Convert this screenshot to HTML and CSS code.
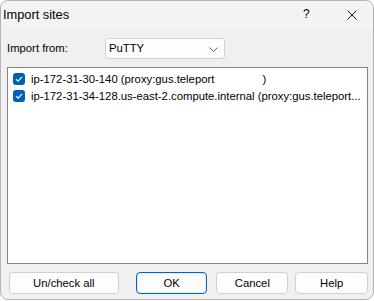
FILE: index.html
```html
<!DOCTYPE html>
<html>
<head>
<meta charset="utf-8">
<link rel="stylesheet" href="styles.css">
</head>
<body>
<div class="window">
  <div class="titlebar">
    <span class="title">Import sites</span>
    <span class="tb-help">?</span>
    <span class="tb-close"><svg width="10" height="10" viewBox="0 0 10 10"><path d="M0.5 0.5 L9.5 9.5 M9.5 0.5 L0.5 9.5" stroke="#1a1a1a" stroke-width="1"/></svg></span>
  </div>
  <div class="content">
    <div class="row-from">
      <span class="label">Import from:</span>
      <div class="combo">
        <span>PuTTY</span>
        <svg class="chev" width="9" height="5" viewBox="0 0 9 5"><path d="M0.5 0.5 L4.5 4.5 L8.5 0.5" fill="none" stroke="#606060" stroke-width="1"/></svg>
      </div>
    </div>
    <div class="list">
      <div class="item">
        <span class="cb"><svg width="12" height="12" viewBox="0 0 12 12"><path d="M3 6.2 L5 8.2 L9 4" fill="none" stroke="#fff" stroke-width="1.1"/></svg></span>
        <span class="txt">ip-172-31-30-140 (proxy:gus.teleport<span class="gap"></span>)</span>
      </div>
      <div class="item">
        <span class="cb"><svg width="12" height="12" viewBox="0 0 12 12"><path d="M3 6.2 L5 8.2 L9 4" fill="none" stroke="#fff" stroke-width="1.1"/></svg></span>
        <span class="txt">ip-172-31-34-128.us-east-2.compute.internal (proxy:gus.teleport...</span>
      </div>
    </div>
    <div class="buttons">
      <button class="btn btn-check">Un/check all</button>
      <button class="btn btn-ok">OK</button>
      <button class="btn btn-cancel">Cancel</button>
      <button class="btn btn-help">Help</button>
    </div>
  </div>
</div>
</body>
</html>
```
FILE: styles.css
```css
html, body {
  margin: 0;
  padding: 0;
  background: #ffffff;
}
body {
  width: 374px;
  height: 301px;
  overflow: hidden;
  font-family: "Liberation Sans", Arial, sans-serif;
  font-size: 11.3px;
  color: #000;
}
.window {
  box-sizing: border-box;
  width: 374px;
  height: 300px;
  background: #f0f0f0;
  border: 1px solid #b4b4b4;
  border-radius: 8px;
  display: flex;
  flex-direction: column;
}
.titlebar {
  height: 28px;
  display: flex;
  align-items: center;
  background: #f3f3f3;
  border-radius: 8px 8px 0 0;
  position: relative;
}
.title {
  margin-left: 2px;
  font-size: 12.8px;
  margin-top: -2px;
}
.tb-help {
  position: absolute;
  left: 302px;
  top: 6px;
  font-size: 12px;
}
.tb-close {
  position: absolute;
  left: 346px;
  top: 9px;
  line-height: 0;
}
.content {
  padding: 0 5px 0 6px;
  display: flex;
  flex-direction: column;
}
.row-from {
  display: flex;
  align-items: center;
  height: 22px;
  margin-top: 8px;
}
.label {
  width: 98px;
}
.combo {
  box-sizing: border-box;
  width: 120px;
  height: 21px;
  background: #fdfdfd;
  border: 1px solid #d0d0d0;
  border-radius: 3px;
  display: flex;
  align-items: center;
  padding-left: 3px;
  position: relative;
}
.chev {
  position: absolute;
  left: 103px;
  top: 8px;
}
.list {
  box-sizing: border-box;
  margin-top: 8px;
  width: 361px;
  height: 197px;
  background: #ffffff;
  border: 1px solid #838383;
  padding: 2px 0 0 5px;
}
.item {
  display: flex;
  align-items: center;
  height: 17px;
  white-space: pre;
}
.cb {
  box-sizing: border-box;
  width: 12px;
  height: 12px;
  background: #005fb8;
  border-radius: 3px;
  margin-right: 6px;
  line-height: 0;
}
.gap {
  display: inline-block;
  width: 48px;
}
.buttons {
  display: flex;
  margin-top: 8px;
  margin-left: 2px;
}
.btn {
  box-sizing: border-box;
  height: 22px;
  font-family: inherit;
  font-size: 11.3px;
  color: #000;
  background: #fdfdfd;
  border: 1px solid #d0d0d0;
  border-radius: 4px;
  padding: 0;
}
.btn-check { width: 110px; margin-right: 17px; }
.btn-ok { width: 72px; margin-right: 9px; border-color: #0067c0; box-shadow: inset 0 0 0 1px #e0ecf8; }
.btn-cancel { width: 72px; margin-right: 7px; }
.btn-help { width: 73px; }
```
